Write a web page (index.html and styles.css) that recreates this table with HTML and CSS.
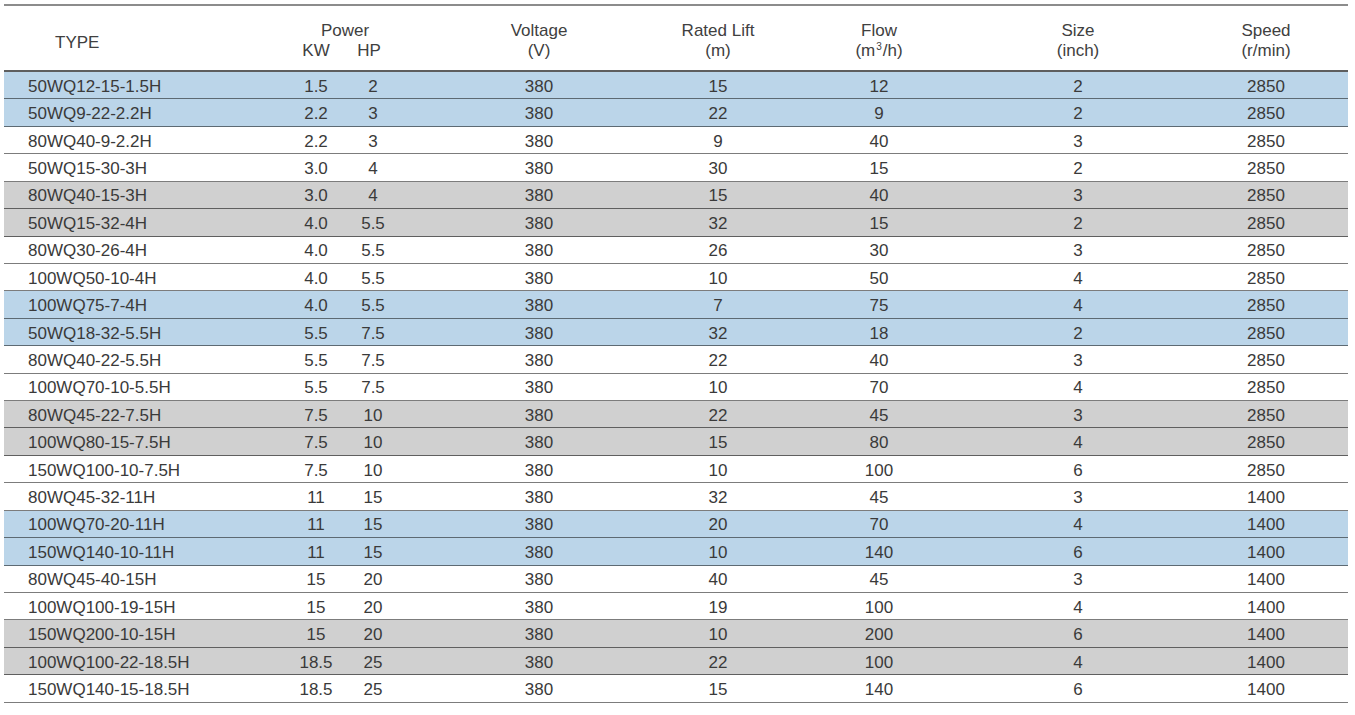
FILE: index.html
```html
<!DOCTYPE html>
<html lang="en">
<head>
<meta charset="utf-8">
<title>WQ Pump Parameters</title>
<link rel="stylesheet" href="styles.css">
</head>
<body>
<div class="page">
  <div class="table">
    <div class="row head">
      <div class="c type">TYPE</div>
      <div class="c power">
        <div class="pw-title">Power</div>
        <div class="pw-units"><span class="u-kw">KW</span><span class="u-hp">HP</span></div>
      </div>
      <div class="c two">Voltage<br>(V)</div>
      <div class="c two">Rated Lift<br>(m)</div>
      <div class="c two">Flow<br>(m<sup>3</sup>/h)</div>
      <div class="c two">Size<br>(inch)</div>
      <div class="c two speed">Speed<br>(r/min)</div>
    </div>

    <div class="row blue"><div class="c type">50WQ12-15-1.5H</div><div class="c">1.5</div><div class="c">2</div><div class="c">380</div><div class="c">15</div><div class="c">12</div><div class="c">2</div><div class="c speed">2850</div></div>
    <div class="row blue"><div class="c type">50WQ9-22-2.2H</div><div class="c">2.2</div><div class="c">3</div><div class="c">380</div><div class="c">22</div><div class="c">9</div><div class="c">2</div><div class="c speed">2850</div></div>
    <div class="row"><div class="c type">80WQ40-9-2.2H</div><div class="c">2.2</div><div class="c">3</div><div class="c">380</div><div class="c">9</div><div class="c">40</div><div class="c">3</div><div class="c speed">2850</div></div>
    <div class="row"><div class="c type">50WQ15-30-3H</div><div class="c">3.0</div><div class="c">4</div><div class="c">380</div><div class="c">30</div><div class="c">15</div><div class="c">2</div><div class="c speed">2850</div></div>
    <div class="row grey"><div class="c type">80WQ40-15-3H</div><div class="c">3.0</div><div class="c">4</div><div class="c">380</div><div class="c">15</div><div class="c">40</div><div class="c">3</div><div class="c speed">2850</div></div>
    <div class="row grey"><div class="c type">50WQ15-32-4H</div><div class="c">4.0</div><div class="c">5.5</div><div class="c">380</div><div class="c">32</div><div class="c">15</div><div class="c">2</div><div class="c speed">2850</div></div>
    <div class="row"><div class="c type">80WQ30-26-4H</div><div class="c">4.0</div><div class="c">5.5</div><div class="c">380</div><div class="c">26</div><div class="c">30</div><div class="c">3</div><div class="c speed">2850</div></div>
    <div class="row"><div class="c type">100WQ50-10-4H</div><div class="c">4.0</div><div class="c">5.5</div><div class="c">380</div><div class="c">10</div><div class="c">50</div><div class="c">4</div><div class="c speed">2850</div></div>
    <div class="row blue"><div class="c type">100WQ75-7-4H</div><div class="c">4.0</div><div class="c">5.5</div><div class="c">380</div><div class="c">7</div><div class="c">75</div><div class="c">4</div><div class="c speed">2850</div></div>
    <div class="row blue"><div class="c type">50WQ18-32-5.5H</div><div class="c">5.5</div><div class="c">7.5</div><div class="c">380</div><div class="c">32</div><div class="c">18</div><div class="c">2</div><div class="c speed">2850</div></div>
    <div class="row"><div class="c type">80WQ40-22-5.5H</div><div class="c">5.5</div><div class="c">7.5</div><div class="c">380</div><div class="c">22</div><div class="c">40</div><div class="c">3</div><div class="c speed">2850</div></div>
    <div class="row"><div class="c type">100WQ70-10-5.5H</div><div class="c">5.5</div><div class="c">7.5</div><div class="c">380</div><div class="c">10</div><div class="c">70</div><div class="c">4</div><div class="c speed">2850</div></div>
    <div class="row grey"><div class="c type">80WQ45-22-7.5H</div><div class="c">7.5</div><div class="c">10</div><div class="c">380</div><div class="c">22</div><div class="c">45</div><div class="c">3</div><div class="c speed">2850</div></div>
    <div class="row grey"><div class="c type">100WQ80-15-7.5H</div><div class="c">7.5</div><div class="c">10</div><div class="c">380</div><div class="c">15</div><div class="c">80</div><div class="c">4</div><div class="c speed">2850</div></div>
    <div class="row"><div class="c type">150WQ100-10-7.5H</div><div class="c">7.5</div><div class="c">10</div><div class="c">380</div><div class="c">10</div><div class="c">100</div><div class="c">6</div><div class="c speed">2850</div></div>
    <div class="row"><div class="c type">80WQ45-32-11H</div><div class="c">11</div><div class="c">15</div><div class="c">380</div><div class="c">32</div><div class="c">45</div><div class="c">3</div><div class="c speed">1400</div></div>
    <div class="row blue"><div class="c type">100WQ70-20-11H</div><div class="c">11</div><div class="c">15</div><div class="c">380</div><div class="c">20</div><div class="c">70</div><div class="c">4</div><div class="c speed">1400</div></div>
    <div class="row blue"><div class="c type">150WQ140-10-11H</div><div class="c">11</div><div class="c">15</div><div class="c">380</div><div class="c">10</div><div class="c">140</div><div class="c">6</div><div class="c speed">1400</div></div>
    <div class="row"><div class="c type">80WQ45-40-15H</div><div class="c">15</div><div class="c">20</div><div class="c">380</div><div class="c">40</div><div class="c">45</div><div class="c">3</div><div class="c speed">1400</div></div>
    <div class="row"><div class="c type">100WQ100-19-15H</div><div class="c">15</div><div class="c">20</div><div class="c">380</div><div class="c">19</div><div class="c">100</div><div class="c">4</div><div class="c speed">1400</div></div>
    <div class="row grey"><div class="c type">150WQ200-10-15H</div><div class="c">15</div><div class="c">20</div><div class="c">380</div><div class="c">10</div><div class="c">200</div><div class="c">6</div><div class="c speed">1400</div></div>
    <div class="row grey"><div class="c type">100WQ100-22-18.5H</div><div class="c">18.5</div><div class="c">25</div><div class="c">380</div><div class="c">22</div><div class="c">100</div><div class="c">4</div><div class="c speed">1400</div></div>
    <div class="row"><div class="c type">150WQ140-15-18.5H</div><div class="c">18.5</div><div class="c">25</div><div class="c">380</div><div class="c">15</div><div class="c">140</div><div class="c">6</div><div class="c speed">1400</div></div>
  </div>
</div>
</body>
</html>
```

FILE: styles.css
```css
html, body {
  margin: 0;
  padding: 0;
  background: #ffffff;
}

body {
  font-family: "Liberation Sans", Arial, sans-serif;
  color: #3a3a3a;
  overflow: hidden;
}

.page {
  padding: 4px 0 0 4px;
  width: 1344px;
}

.table {
  border-top: 2px solid #8c8c8c;
  display: flex;
  flex-direction: column;
}

.row {
  display: grid;
  grid-template-columns: 284px 56px 58px 274px 84px 238px 160px 190px;
  height: 27.43px;
  box-sizing: border-box;
  border-bottom: 1px solid #7c7c7c;
  font-size: 17px;
  align-items: center;
}

.row.blue {
  background: #bbd5e9;
  border-bottom-color: #5d6a73;
}

.row.grey {
  background: #d0d0d0;
  border-bottom-color: #5f5f5f;
}

.row.head {
  height: 66px;
  border-bottom: 2px solid #5e5e5e;
  font-size: 17px;
  align-items: start;
  padding-top: 15px;
  color: #404040;
}

.c {
  text-align: center;
  white-space: nowrap;
  line-height: 20px;
  padding-top: 3px;
}

.c.type {
  text-align: left;
  padding-left: 24px;
}

.head .c.type {
  padding-left: 51px;
  padding-top: 12px;
}

.c.speed {
  padding-left: 26px;
}

.head .power {
  grid-column: span 2;
  padding-top: 0;
}

.pw-units {
  display: flex;
}

.u-kw {
  width: 56px;
  text-align: center;
  padding-left: 2px;
}

.u-hp {
  width: 58px;
  text-align: center;
  padding-right: 6px;
}

.head .two {
  padding-top: 0;
}

sup {
  font-size: 10px;
  line-height: 0;
  vertical-align: 6px;
  margin: 0 1px;
}
```
